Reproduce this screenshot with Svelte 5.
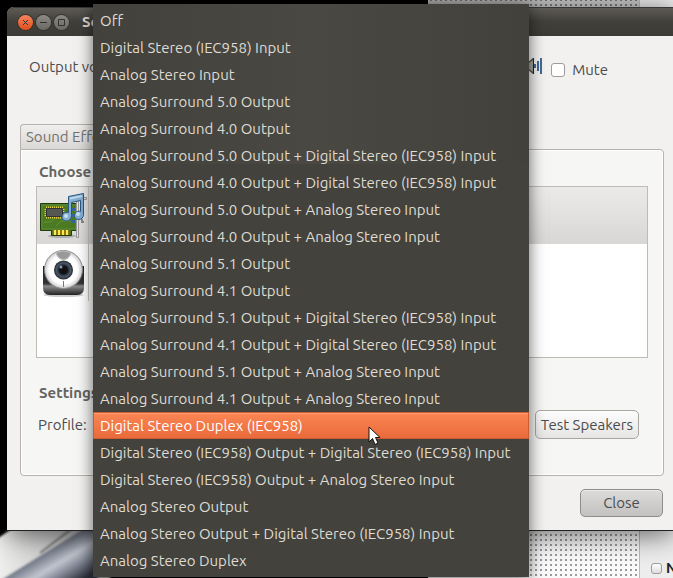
<script lang="ts">
  const profiles = [
    'Off',
    'Digital Stereo (IEC958) Input',
    'Analog Stereo Input',
    'Analog Surround 5.0 Output',
    'Analog Surround 4.0 Output',
    'Analog Surround 5.0 Output + Digital Stereo (IEC958) Input',
    'Analog Surround 4.0 Output + Digital Stereo (IEC958) Input',
    'Analog Surround 5.0 Output + Analog Stereo Input',
    'Analog Surround 4.0 Output + Analog Stereo Input',
    'Analog Surround 5.1 Output',
    'Analog Surround 4.1 Output',
    'Analog Surround 5.1 Output + Digital Stereo (IEC958) Input',
    'Analog Surround 4.1 Output + Digital Stereo (IEC958) Input',
    'Analog Surround 5.1 Output + Analog Stereo Input',
    'Analog Surround 4.1 Output + Analog Stereo Input',
    'Digital Stereo Duplex (IEC958)',
    'Digital Stereo (IEC958) Output + Digital Stereo (IEC958) Input',
    'Digital Stereo (IEC958) Output + Analog Stereo Input',
    'Analog Stereo Output',
    'Analog Stereo Output + Digital Stereo (IEC958) Input',
    'Analog Stereo Duplex'
  ];

  let active = $state(15);
  let muted = $state(false);
  let notify = $state(false);
</script>

<div class="desktop">
  <div class="backdrop">
    <svg class="photo" viewBox="0 0 427 578" preserveAspectRatio="xMinYMax slice" aria-hidden="true">
      <defs>
        <linearGradient id="metal" x1="0" y1="0" x2="1" y2="0">
          <stop offset="0" stop-color="#f4f4f2" />
          <stop offset="1" stop-color="#a4a4a6" />
        </linearGradient>
        <linearGradient id="shaft" gradientUnits="userSpaceOnUse" x1="40" y1="550" x2="64" y2="590">
          <stop offset="0" stop-color="#5d626e" />
          <stop offset=".2" stop-color="#858b99" />
          <stop offset=".45" stop-color="#c3c6cf" />
          <stop offset=".7" stop-color="#7c8290" />
          <stop offset="1" stop-color="#2c2f37" />
        </linearGradient>
        <filter id="soft"><feGaussianBlur stdDeviation="1" /></filter>
      </defs>
      <rect width="427" height="578" fill="#000" />
      <g filter="url(#soft)">
        <path d="M-9 543 L28 518 H110 V590 H-9Z" fill="url(#metal)" />
        <path d="M-4 583 L98 520 V600 H0Z" fill="url(#shaft)" />
        <path d="M40 553 L78 524" stroke="#66696c" stroke-width="2" />
      </g>
    </svg>
    <div class="canvas"></div>
    <div class="sidebar">
      <label><input type="checkbox" bind:checked={notify} /><b>N</b></label>
    </div>
  </div>

  <main class="window">
    <header class="titlebar">
      <button class="wm close" aria-label="Close window">
        <svg viewBox="0 0 15 15"><path d="M5 5l5 5M10 5l-5 5" /></svg>
      </button>
      <button class="wm" aria-label="Minimize">
        <svg viewBox="0 0 15 15"><path d="M4 7.5h7" /></svg>
      </button>
      <button class="wm" aria-label="Maximize">
        <svg viewBox="0 0 15 15"><path d="M4.5 4.5h6v6h-6z" /></svg>
      </button>
      <h1>Sound</h1>
    </header>

    <div class="body">
      <div class="volume">
        <span class="volume-label">Output volume:</span>
        <svg class="speaker" viewBox="0 0 20 18" aria-hidden="true">
          <path d="M1 6h4l6-5h1v16h-1l-6-5H1z" fill="#55534f" />
          <path d="M7 6l4-3v12l-4-3z" fill="#a6a39c" />
          <path d="M11 1h1v16h-1z" fill="#222" />
          <path d="M12 7h2v4h-2zM15 4h2v10h-2zM18 1h2v16h-2z" fill="#42699a" />
        </svg>
        <label class="mute"><input type="checkbox" bind:checked={muted} />Mute</label>
      </div>

      <button class="tab">Sound Effects</button>

      <section class="page">
        <h2>Choose a device to configure:</h2>
        <ul class="devices">
          <li class="selected">
            <svg viewBox="37 187 51 57" aria-hidden="true">
              <ellipse cx="62" cy="236" rx="14" ry="2" fill="#0003" />
              <path d="M40.500 203.500h38v27h-7v5h-20v-5h-11z" fill="#4c7a22" stroke="#203c0c" />
              <path d="M42 205h34v24H42z" fill="none" stroke="#5e8a33" />
              <path d="M44 222h7l4-4h9M56 226l5-5h9" fill="none" stroke="#64913a" />
              <path d="M46 207.500h17M46 217.500h17" stroke="#e8d443" stroke-width="2" stroke-dasharray="1 1" />
              <path d="M45.500 209v8M63.500 209v8" stroke="#e8d443" stroke-dasharray="1 1" stroke-width="2" />
              <path d="M46.500 208.500h16v8h-16z" fill="#555753" stroke="#333" />
              <path d="M53 230h16v5H53z" fill="#8e7710" />
              <path d="M55 230v5M59 230v5M63 230v5M67 230v5" stroke="#fce94f" stroke-width="2" />
              <path d="M78.500 237.500v-38h8v-2h-10v40z" fill="#e4e4e4" stroke="#9a9a9a" />
              <path d="M82 219v3h2" fill="none" stroke="#888" stroke-width="2" />
              <path d="M72 208h3v3h-3zM72 214h3v3h-3zM72 220h3v3h-3z" fill="#3465a4" />
              <path
                d="M68.500 196.500l15-3v21c0 3-2 5-5 5-2.500 0-4-1.500-4-4 0-3 3-5 6-4v-11l-9 2v13c0 3-2 5.500-5 5.500-2.500 0-4.500-1.500-4.500-4 0-3.500 3-5.500 6.500-4.500z"
                fill="#85add0" stroke="#295780" />
              <path d="M70 198.500l12-2.500" stroke="#bdd7eb" stroke-width="2" />
              <circle cx="66" cy="216" r="2" fill="#c6def0" />
              <circle cx="78" cy="214" r="2" fill="#c6def0" />
            </svg>
          </li>
          <li>
            <svg viewBox="37 243 51 57" aria-hidden="true">
              <defs>
                <linearGradient id="base" x1="0" y1="0" x2="0" y2="1">
                  <stop offset="0" stop-color="#222" />
                  <stop offset=".6" stop-color="#333" />
                  <stop offset=".7" stop-color="#8a8a8a" />
                  <stop offset="1" stop-color="#222" />
                </linearGradient>
                <radialGradient id="ball">
                  <stop offset=".75" stop-color="#fff" />
                  <stop offset="1" stop-color="#ccc" />
                </radialGradient>
                <radialGradient id="lens">
                  <stop offset="0" stop-color="#050505" />
                  <stop offset=".4" stop-color="#141a24" />
                  <stop offset=".75" stop-color="#4c586a" />
                  <stop offset="1" stop-color="#222" />
                </radialGradient>
              </defs>
              <ellipse cx="63.500" cy="294" rx="20" ry="2" fill="#0003" />
              <path d="M43 265h41v22q0 7-7 7H50q-7 0-7-7z" fill="url(#base)" />
              <circle cx="63.500" cy="268.500" r="19" fill="url(#ball)" stroke="#8d8d8d" />
              <path d="M56 251.500q7-3 15 0-2 7-7.500 7T56 251.500z" fill="#999" stroke="#bbb" />
              <path d="M63.500 280v6" stroke="#777" />
              <circle cx="63.500" cy="269" r="9.500" fill="url(#lens)" />
              <circle cx="63.500" cy="269" r="4" fill="#111" />
              <circle cx="61" cy="266" r="1.500" fill="#8d9bb0" />
            </svg>
          </li>
        </ul>

        <h2>Settings for the selected device:</h2>
        <div class="profile">
          <span id="profile-label">Profile:</span>
          <button class="btn">Test Speakers</button>
        </div>
      </section>

      <footer>
        <button class="btn dark">Close</button>
      </footer>
    </div>
  </main>

  <div class="menu" role="listbox" aria-labelledby="profile-label">
    {#each profiles as profile, i}
      <button
        role="option"
        aria-selected={i === active}
        class:active={i === active}
        onclick={() => (active = i)}
      >{profile}</button>
    {/each}
  </div>

  <svg class="cursor" viewBox="0 0 13 20" aria-hidden="true">
    <path d="M1 1v15l3.500-3.500 2.500 6 3-1.500-2.500-5.500H12z" fill="#fff" stroke="#111" />
  </svg>
</div>

<style>
  :global(body) {
    margin: 0;
    background: #000;
  }

  .desktop {
    position: relative;
    min-height: 100vh;
    overflow: hidden;
    display: flow-root;
    font-family: Ubuntu, "Open Sans", "Noto Sans", sans-serif;
    font-size: 15px;
    line-height: 20px;
    color: #4c4c4c;
  }

  button {
    font: inherit;
    color: inherit;
    cursor: default;
  }

  .backdrop {
    position: absolute;
    inset: 0;
    display: grid;
    grid-template-columns: 428px 212px 1fr;
  }

  .photo {
    width: 100%;
    height: 100%;
  }

  .canvas {
    background:
      linear-gradient(rgba(0, 0, 0, 0.2), transparent 60px),
      radial-gradient(circle at 2px 2px, #9a9a9a 1px, transparent 1px) 1px 3px / 5px 5px,
      #fafafa;
    border-right: 1px solid #bbb;
  }

  .sidebar {
    display: flex;
    align-items: flex-end;
    background: #ededed;
    overflow: hidden;
  }

  .sidebar label {
    display: flex;
    align-items: center;
    gap: 4px;
    padding-left: 11px;
    font-size: 14px;
    color: #222;
  }

  input {
    appearance: none;
    box-sizing: border-box;
    flex: none;
    width: 14px;
    height: 14px;
    margin: 0;
    background: #fff;
    border: 1px solid #a09d98;
    border-radius: 3px;
  }

  input:checked {
    background: #f07746;
  }

  .sidebar input {
    width: 11px;
    height: 11px;
    background: linear-gradient(#fff, #ddd);
  }

  .window {
    position: relative;
    margin: 7px 0 47px 7px;
    background: #f2f1f0;
    border-bottom: 1px solid #222;
    border-top-left-radius: 7px;
    box-shadow: 0 4px 28px rgba(0, 0, 0, 0.6);
  }

  .titlebar {
    display: flex;
    align-items: center;
    gap: 3px;
    box-sizing: border-box;
    height: 29px;
    padding-left: 11px;
    border-top: 1px solid #383733;
    border-top-left-radius: 7px;
    background: linear-gradient(#5d5b53, #403f3a 50%, #3c3b37);
  }

  .wm {
    width: 15px;
    height: 15px;
    padding: 0;
    border: 0;
    border-radius: 50%;
    background: linear-gradient(#8b8982, #6a6963);
    box-shadow: 0 0 0 1px #35342f;
  }

  .wm.close {
    background: linear-gradient(#f58560, #df4e1c);
  }

  .wm svg {
    display: block;
    fill: none;
    stroke: #33322e;
  }

  h1 {
    margin: 0 0 0 10px;
    font-size: 15px;
    color: #dfdbd2;
  }

  .body {
    padding: 21px 9px 13px 13px;
  }

  .volume {
    display: flex;
    align-items: flex-start;
    padding: 0 56px 0 9px;
    margin-bottom: 44px;
  }

  .volume-label {
    flex: 1;
  }

  .speaker {
    width: 20px;
    height: 18px;
    margin-right: 9px;
  }

  .mute {
    display: flex;
    align-items: center;
    gap: 7px;
    padding-top: 3px;
  }

  .tab {
    display: block;
    box-sizing: border-box;
    height: 25px;
    padding: 0 5px;
    border: 1px solid #b6b2ad;
    border-bottom: 0;
    border-radius: 4px 4px 0 0;
    background: linear-gradient(#f0efee, #d9d8d6);
    color: #73716e;
  }

  .page {
    padding: 12px 15px 36px;
    background: #f6f6f5;
    border: 1px solid #b6b2ad;
    border-radius: 0 4px 4px 4px;
    box-shadow: inset 0 0 0 1px #fff;
  }

  h2 {
    margin: 0;
    padding-left: 3px;
    font-size: 15px;
    line-height: 20px;
    color: #666461;
  }

  .devices {
    box-sizing: border-box;
    min-height: 172px;
    margin: 4px 0 25px;
    padding: 0;
    list-style: none;
    background: #fff;
    border: 1px solid #bdbab7;
  }

  .devices li {
    height: 57px;
  }

  .devices .selected {
    background: linear-gradient(#ebeae9, #d8d7d5);
  }

  .devices svg {
    display: block;
    width: 51px;
    height: 57px;
    border-right: 1px solid #c9c8c6;
  }

  .profile {
    display: flex;
    align-items: center;
    justify-content: space-between;
    margin-top: 7px;
    padding: 0 9px 0 2px;
  }

  .btn {
    height: 29px;
    padding: 0 5px;
    border: 1px solid #aaa7a3;
    border-radius: 5px;
    background: linear-gradient(#fdfdfd, #e6e5e4);
    box-shadow: inset 0 1px #fff;
  }

  .dark {
    width: 83px;
    height: 28px;
    border-color: #8f8d8a;
    background: linear-gradient(#dcdcdb, #c2c1c0);
    box-shadow: inset 0 1px #ebebeb;
  }

  footer {
    display: flex;
    justify-content: flex-end;
    padding: 13px 1px 0 0;
  }

  .menu {
    position: absolute;
    left: 93px;
    top: 4px;
    box-sizing: border-box;
    width: 436px;
    padding: 3px 0;
    background: linear-gradient(90deg, #42413c, #494843 50%, #42413c) top / 100% 160px no-repeat, #43423d;
    box-shadow: 0 2px 15px rgba(0, 0, 0, 0.6);
  }

  .menu button {
    display: block;
    box-sizing: border-box;
    width: 100%;
    height: 27px;
    padding: 0 6px;
    border: 1px solid transparent;
    background: none;
    color: #dfdbd2;
    text-align: left;
    white-space: nowrap;
  }

  .menu .active {
    background: linear-gradient(#fb8755, #e9693a) border-box;
    border-color: #cf5a2d;
    box-shadow: inset 0 1px #ff9e74;
    color: #fff;
  }

  .cursor {
    position: absolute;
    left: 368px;
    top: 426px;
    width: 13px;
    height: 20px;
  }
</style>
